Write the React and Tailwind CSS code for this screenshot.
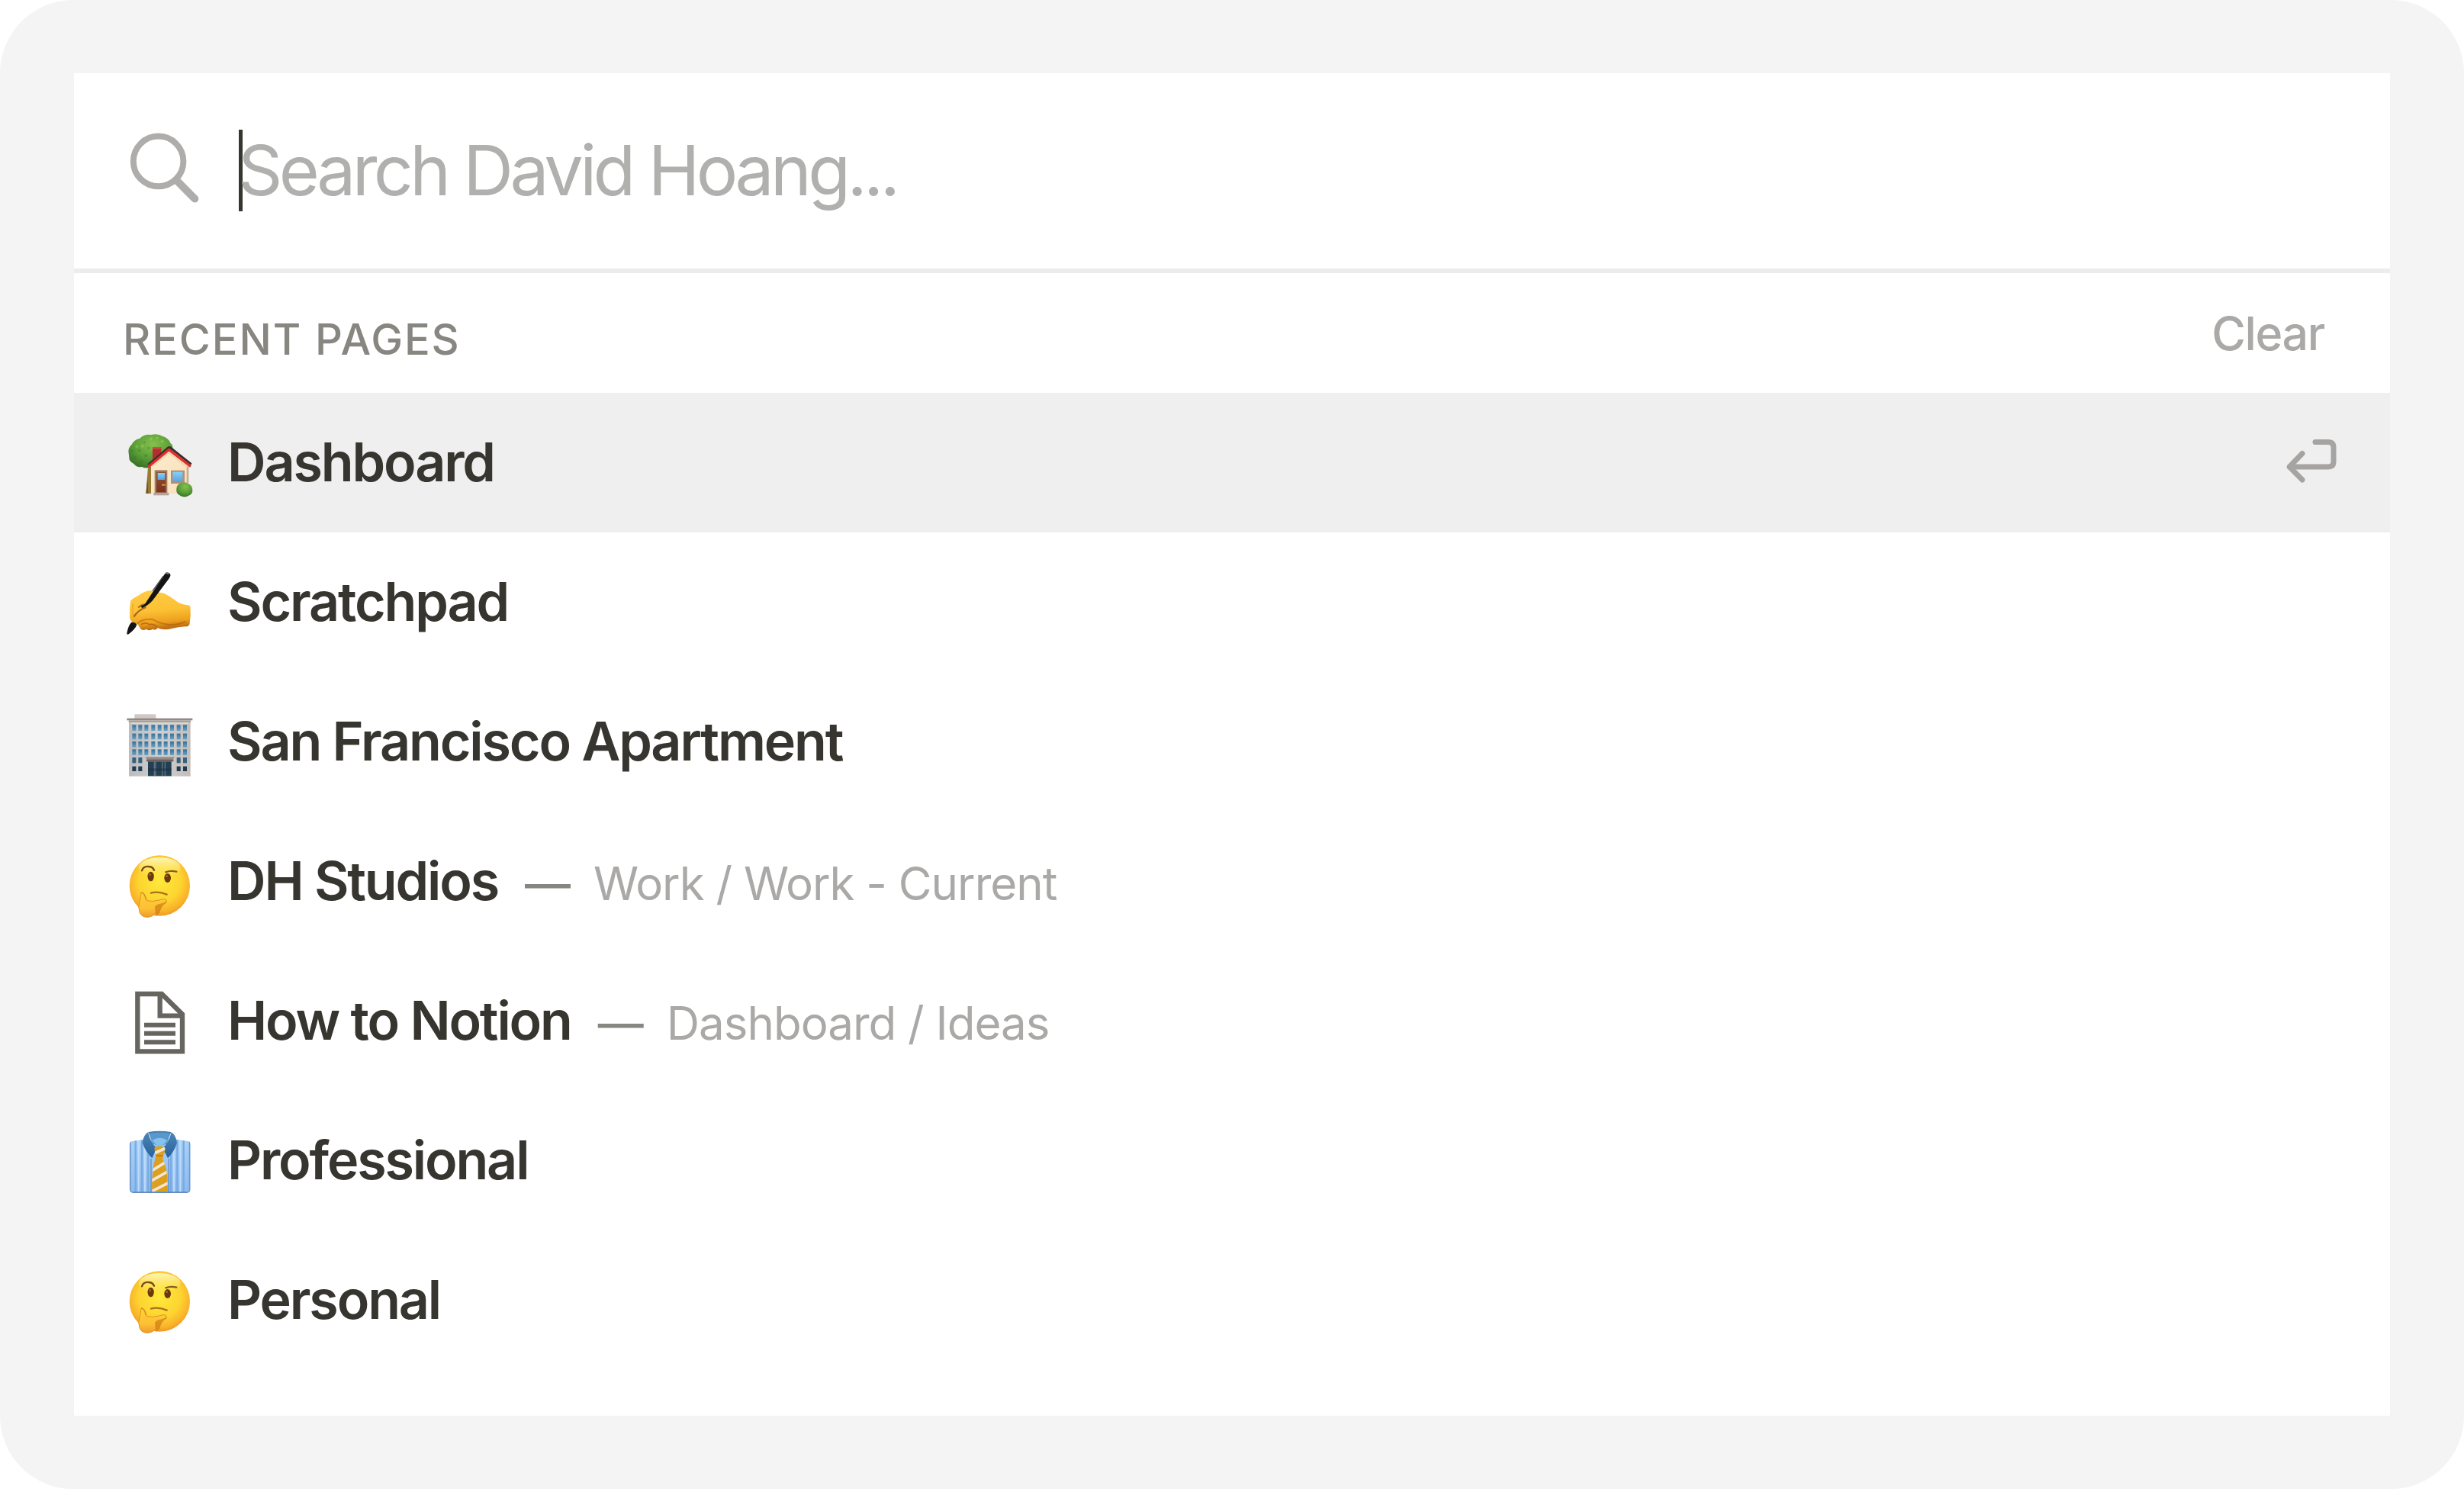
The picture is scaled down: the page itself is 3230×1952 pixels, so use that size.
import React from 'react';

const SearchIcon = () => (
  <svg className="w-[96px] h-[96px] shrink-0" viewBox="168 172 96 96" fill="none" stroke="#aeadab" strokeLinecap="round">
    <circle cx="207.6" cy="211.4" r="32.8" strokeWidth="8" />
    <path d="M232.5 237.5 L255.3 260.6" strokeWidth="10" />
  </svg>
);

const ReturnIcon = () => (
  <svg
    className="w-[72px] h-[64px] shrink-0"
    viewBox="2994 574 72 64"
    fill="none"
    stroke="#a5a4a2"
    strokeWidth="7"
    strokeLinecap="round"
    strokeLinejoin="round"
  >
    <path d="M3035 579.5 H3052 Q3059 579.5 3059 586.5 V605 Q3059 612 3052 612 H3001.5" />
    <path d="M3018 594.5 L3001.2 612 L3018 629" />
  </svg>
);

const HouseIcon = () => (
  <svg className="w-[120px] h-[120px] shrink-0" viewBox="0 -12 360 360">
    <defs>
      <radialGradient id="tree" cx="0.55" cy="0.3" r="0.7">
        <stop offset="0" stopColor="#86c04c" />
        <stop offset="0.6" stopColor="#5a9f38" />
        <stop offset="1" stopColor="#3a7428" />
      </radialGradient>
      <linearGradient id="wall" x1="0" y1="0" x2="1" y2="1">
        <stop offset="0" stopColor="#fdeccb" />
        <stop offset="1" stopColor="#f8dfba" />
      </linearGradient>
      <linearGradient id="houseDoor" x1="0" y1="0" x2="0" y2="1">
        <stop offset="0" stopColor="#8a5638" />
        <stop offset="1" stopColor="#7e2f1c" />
      </linearGradient>
      <linearGradient id="glass" x1="0" y1="0" x2="0" y2="1">
        <stop offset="0" stopColor="#86d0fb" />
        <stop offset="1" stopColor="#5ba2dc" />
      </linearGradient>
    </defs>
    <path
      d="M56 132 Q52 112 68 98 Q78 78 100 74 Q118 56 144 60 Q170 53 190 66 Q212 72 220 92 Q236 104 226 124 L150 184 Q128 196 108 186 Q88 190 76 174 Q56 164 58 148 Z"
      fill="url(#tree)"
    />
    <g fill="#3d7a29" opacity="0.45">
      <circle cx="80" cy="150" r="6" />
      <circle cx="104" cy="166" r="7" />
      <circle cx="98" cy="122" r="5" />
      <circle cx="124" cy="142" r="6" />
      <circle cx="134" cy="112" r="5" />
      <circle cx="118" cy="90" r="4" />
      <circle cx="70" cy="124" r="5" />
    </g>
    <g fill="#9bd05c" opacity="0.5">
      <circle cx="144" cy="76" r="6" />
      <circle cx="168" cy="72" r="5" />
      <circle cx="110" cy="104" r="6" />
      <circle cx="188" cy="86" r="6" />
      <circle cx="88" cy="106" r="5" />
    </g>
    <path d="M132 186 L146 176 V291 H124 Z" fill="#9a7b36" />
    <path d="M124 291 L130 230 L133 291 Z" fill="#6f5426" />
    <path d="M144 178 L214 122 L290 182 V292 H144 Z" fill="url(#wall)" />
    <path d="M284 184 H292 V250 H284 Z" fill="#c9ad93" />
    <path d="M150 108 H184 V134 L150 158 Z" fill="#b32e2e" />
    <path d="M150 108 H184 V116 H150 Z" fill="#cf4a44" />
    <path d="M133 178 L212 111 Q216 108 220 111 L302 176" fill="none" stroke="#3b2e2c" strokeWidth="9" />
    <path d="M133 186 L214 119 L300 184" fill="none" stroke="#e02f2b" strokeWidth="10" />
    <path d="M150 184 L214 132 L282 184" fill="none" stroke="#e8cfa8" strokeWidth="4" />
    <path d="M158 199 H208 V290 H158 Z" fill="#a27d64" />
    <path d="M165 206 H202 V286 H165 Z" fill="url(#houseDoor)" />
    <path d="M170 210 H198 V237 H170 Z" fill="url(#glass)" />
    <path d="M186 254 H200 V260 H186 Z" fill="#d39a36" />
    <path d="M154 288 H214 V298 H154 Z" fill="#b3a49c" />
    <path d="M222 200 H276 V252 H222 Z" fill="#b09078" />
    <path d="M229 206 H268 V244 H229 Z" fill="url(#glass)" />
    <path
      d="M244 272 Q246 254 262 250 Q278 242 290 252 Q306 258 307 276 Q308 294 292 299 Q276 309 260 300 Q244 292 244 280 Z"
      fill="url(#tree)"
    />
  </svg>
);

const WritingIcon = () => (
  <svg className="w-[120px] h-[120px] shrink-0" viewBox="0 -17 360 360">
    <defs>
      <linearGradient id="hand" x1="0" y1="0" x2="0.15" y2="1">
        <stop offset="0" stopColor="#ffcb46" />
        <stop offset="0.55" stopColor="#fcc135" />
        <stop offset="0.85" stopColor="#eda01d" />
        <stop offset="1" stopColor="#c07012" />
      </linearGradient>
    </defs>
    <path
      d="M64 158 Q76 146 94 138 Q118 120 142 118 L196 130 Q222 142 240 158 Q258 172 278 174 Q292 174 298 180 Q302 214 296 248 Q294 262 278 260 Q250 262 226 268 Q196 276 170 266 Q162 278 150 270 Q136 280 126 270 Q108 280 100 264 L90 250 Q66 248 60 226 Q58 190 64 158 Z"
      fill="url(#hand)"
    />
    <path d="M88 250 Q110 228 150 232 Q178 248 210 252 Q250 256 280 240" fill="none" stroke="#a55a0b" strokeWidth="6" opacity="0.5" />
    <path d="M104 252 Q124 240 140 254 M136 254 Q150 246 168 262" fill="none" stroke="#a65c10" strokeWidth="5" opacity="0.7" />
    <path d="M76 222 Q92 196 124 184" fill="none" stroke="#8a4d0e" strokeWidth="7" opacity="0.75" />
    <path d="M94 186 Q104 174 124 172" fill="none" stroke="#7d4a12" strokeWidth="6" opacity="0.7" />
    <path d="M72 170 Q70 200 74 226" fill="none" stroke="#e9a126" strokeWidth="6" opacity="0.6" />
    <path d="M104 178 Q118 178 126 162 L196 56 Q206 42 218 52 Q224 60 214 72 L150 158 Q132 178 108 188 Z" fill="#141414" />
    <path d="M202 48 L214 54" stroke="#8b7468" strokeWidth="6" />
    <path d="M150 120 L192 62" stroke="#44474a" strokeWidth="4" />
    <path d="M66 244 Q80 240 88 252 Q84 268 56 290 Q48 294 49 286 Q54 258 66 244 Z" fill="#141414" />
  </svg>
);

const OfficeIcon = () => (
  <svg className="w-[120px] h-[120px] shrink-0" viewBox="0 -9 360 360">
    <defs>
      <linearGradient id="pane" x1="0" y1="0" x2="0" y2="1">
        <stop offset="0" stopColor="#356f96" />
        <stop offset="1" stopColor="#6ba3c6" />
      </linearGradient>
      <linearGradient id="facade" x1="0" y1="0" x2="1" y2="0">
        <stop offset="0" stopColor="#bcbcbe" />
        <stop offset="0.5" stopColor="#d0d0d1" />
        <stop offset="1" stopColor="#c3bdba" />
      </linearGradient>
    </defs>
    <rect x="79" y="64" width="84" height="18" fill="#cfc8c4" />
    <rect x="57" y="92" width="242" height="216" fill="url(#facade)" />
    <rect x="49" y="80" width="258" height="8" fill="#8f8883" />
    <rect x="56" y="88" width="244" height="8" fill="#a8a09b" />
    <rect x="64" y="96" width="228" height="6" fill="#dcd6d0" />
    {[106, 140, 171, 202].map((y) =>
      [70, 94, 118, 145, 170, 194, 219, 245, 270].map((x) => (
        <rect key={`${x}-${y}`} x={x} y={y} width="15" height="23" fill="url(#pane)" />
      ))
    )}
    {[70, 94, 245, 270].map((x) => (
      <g key={x}>
        <rect x={x} y="234" width="15" height="22" fill="#36607e" />
        <rect x={x} y="269" width="15" height="19" fill="#1f3b50" />
      </g>
    ))}
    <path d="M122 232 H236 L230 244 H128 Z" fill="#958c88" />
    <rect x="126" y="242" width="106" height="8" fill="#6d6462" />
    <rect x="132" y="250" width="92" height="57" fill="#243f52" />
    <path d="M157 250 V307 M162 250 V307 M188 250 V307 M199 250 V307" stroke="#5f7686" strokeWidth="4" />
    <path d="M132 282 H224" stroke="#1a3040" strokeWidth="10" opacity="0.5" />
  </svg>
);

const ThinkingIcon = ({ id, className = '' }) => (
  <svg className={`w-[120px] h-[120px] shrink-0 ${className}`} viewBox="0 -15 360 360">
    <defs>
      <radialGradient id={`${id}-face`} cx="0.5" cy="0.42" r="0.58">
        <stop offset="0" stopColor="#ffe93c" />
        <stop offset="0.6" stopColor="#fdd430" />
        <stop offset="0.88" stopColor="#f9b22a" />
        <stop offset="1" stopColor="#ee9a24" />
      </radialGradient>
      <linearGradient id={`${id}-shine`} x1="0" y1="0" x2="0" y2="1">
        <stop offset="0" stopColor="#fffbd0" />
        <stop offset="1" stopColor="#fff27a" stopOpacity="0" />
      </linearGradient>
      <linearGradient id={`${id}-hand`} x1="0" y1="0" x2="0" y2="1">
        <stop offset="0" stopColor="#ffd23a" />
        <stop offset="0.65" stopColor="#fdbf33" />
        <stop offset="1" stopColor="#ee9b2c" />
      </linearGradient>
    </defs>
    <circle cx="178" cy="183" r="119" fill={`url(#${id}-face)`} />
    <ellipse cx="178" cy="112" rx="82" ry="40" fill={`url(#${id}-shine)`} opacity="0.85" />
    <path d="M108 124 Q114 106 134 108 Q150 108 156 122" fill="none" stroke="#7c4a10" strokeWidth="7" strokeLinecap="round" />
    <path d="M202 130 Q220 122 244 128" fill="none" stroke="#80601a" strokeWidth="7" strokeLinecap="round" />
    <ellipse cx="143" cy="147" rx="12.5" ry="19" fill="#6b3a0c" />
    <ellipse cx="209" cy="153" rx="13" ry="18" fill="#6b3a0c" />
    <circle cx="140" cy="140" r="4" fill="#a06f2a" />
    <circle cx="206" cy="146" r="4" fill="#a06f2a" />
    <path d="M144 212 Q172 204 206 218" fill="none" stroke="#a87218" strokeWidth="7" strokeLinecap="round" />
    <path d="M160 258 Q190 254 204 240 L206 250 Q184 262 178 290 L164 304 Z" fill="#cf7a16" opacity="0.7" />
    <path
      d="M106 210 Q116 208 122 226 L127 242 Q150 248 176 240 Q198 232 204 240 Q206 250 186 254 Q164 258 160 266 L162 288 Q156 304 132 307 Q108 308 100 290 Q92 270 98 246 Q104 230 104 218 Z"
      fill={`url(#${id}-hand)`}
      stroke="#e09320"
      strokeWidth="3"
    />
    <path d="M104 212 Q116 206 124 238" fill="none" stroke="#c98318" strokeWidth="4" opacity="0.7" />
  </svg>
);

const PageIcon = () => (
  <svg className="w-[120px] h-[120px] shrink-0" viewBox="0 -7 360 360" fill="none" stroke="#666560">
    <path d="M91 68 H186 L267 148 V294 H91 Z" strokeWidth="19" />
    <path d="M179 68 V154 H267" strokeWidth="19" />
    <path d="M117 190 H240 M117 223 H240 M117 258 H240" strokeWidth="18" />
  </svg>
);

const ShirtIcon = () => (
  <svg className="w-[120px] h-[120px] shrink-0" viewBox="0 -14 360 360">
    <defs>
      <linearGradient id="cloth" x1="0" y1="0" x2="0" y2="1">
        <stop offset="0" stopColor="#a9d2fa" />
        <stop offset="1" stopColor="#8db9ee" />
      </linearGradient>
      <linearGradient id="collar" x1="0" y1="0" x2="0" y2="1">
        <stop offset="0" stopColor="#4c86b8" />
        <stop offset="1" stopColor="#27619a" />
      </linearGradient>
      <clipPath id="body">
        <path d="M70 91 L120 84 H240 L290 91 Q299 93 299 106 V278 Q299 295 282 295 H76 Q60 295 59 278 V104 Q60 93 70 91 Z" />
      </clipPath>
      <clipPath id="tie">
        <path d="M158 116 Q178 104 198 116 Q202 130 192 146 L190 162 Q204 190 208 230 L210 290 H148 Q146 210 160 162 L164 146 Q156 132 158 116 Z" />
      </clipPath>
    </defs>
    <g clipPath="url(#body)">
      <rect x="55" y="80" width="250" height="220" fill="url(#cloth)" />
      <path
        d="M83 80 V300 M108 80 V300 M133 80 V300 M222 80 V300 M247 80 V300 M272 80 V300"
        stroke="#78abe2"
        strokeWidth="7"
      />
      <path d="M95 80 V300 M120 80 V300 M234 80 V300 M259 80 V300" stroke="#bcdbfb" strokeWidth="6" />
      <path d="M62 80 V300 M296 80 V300" stroke="#7399c8" strokeWidth="6" />
      <path d="M55 293 H305" stroke="#628bc0" strokeWidth="6" />
      <path d="M144 160 V300 M213 160 V300" stroke="#4e80bb" strokeWidth="5" opacity="0.6" />
    </g>
    <path d="M134 58 Q178 50 222 58 L206 100 L178 114 L150 100 Z" fill="#5a98cc" />
    <path d="M148 88 Q178 68 208 88 L178 120 Z" fill="#83c3ee" />
    <path d="M132 56 Q114 66 110 98 Q122 132 148 158 L166 118 Q142 98 132 56 Z" fill="url(#collar)" />
    <path d="M224 56 Q242 66 246 98 Q236 132 210 158 L190 118 Q214 98 224 56 Z" fill="url(#collar)" />
    <path d="M134 58 Q178 50 222 58" fill="none" stroke="#457eb0" strokeWidth="6" />
    <g clipPath="url(#tie)">
      <rect x="140" y="100" width="80" height="200" fill="#dd9f1d" />
      <path d="M150 142 L206 116 M146 208 L210 168 M140 250 L214 208 M140 292 L214 254" stroke="#f3e8d2" strokeWidth="11" />
      <path d="M158 148 H198" stroke="#a86f10" strokeWidth="5" opacity="0.7" />
    </g>
  </svg>
);

const pages = [
  { title: 'Dashboard', icon: <HouseIcon />, selected: true },
  { title: 'Scratchpad', icon: <WritingIcon /> },
  { title: 'San Francisco Apartment', icon: <OfficeIcon /> },
  { title: 'DH Studios', icon: <ThinkingIcon id="studios" />, path: 'Work / Work - Current' },
  { title: 'How to Notion', icon: <PageIcon />, path: 'Dashboard / Ideas' },
  { title: 'Professional', icon: <ShirtIcon /> },
  { title: 'Personal', icon: <ThinkingIcon id="personal" className="-mt-2" /> },
];

const PageRow = ({ page }) => (
  <li className={`flex h-[182.9px] items-center pl-[53px] pr-[67px] ${page.selected ? 'bg-[#efefef]' : ''}`}>
    {page.icon}
    <div className="ml-7 -mt-px flex flex-1 items-baseline whitespace-nowrap">
      <span className="text-[70px] font-semibold tracking-[-2.15px] text-[#37352f]">{page.title}</span>
      {page.path && (
        <>
          <span className="ml-[35px] text-[60px] font-medium text-[#888680]">—</span>
          <span className="ml-[30px] text-[60px] tracking-[-1px] text-[#aaa9a7]">{page.path}</span>
        </>
      )}
    </div>
    {page.selected && <ReturnIcon />}
  </li>
);

const App = () => {
  return (
    <div className="h-[1952px] w-[3230px] bg-white font-['Inter',sans-serif]">
      <div className="h-full rounded-[96px] bg-[#f4f4f4] px-[97px] py-24">
        <div className="flex h-[1760px] flex-col bg-white">
          <div className="flex h-[262px] items-center border-b-[6px] border-[#edeceb] pl-[71px]">
            <div className="-mt-2">
              <SearchIcon />
            </div>
            <div className="ml-[49px] -mt-[2px] h-[107px] w-[5px] bg-[#37352f]" />
            <span className="-ml-[6px] -mt-[2px] text-[91px] tracking-[-4.6px] text-[#b0b0ae]">Search David Hoang...</span>
          </div>

          <div className="flex h-[157px] items-center justify-between pl-[64px] pr-[86px]">
            <h2 className="mt-4 text-[56px] font-medium tracking-[1.9px] text-[#888680]">RECENT PAGES</h2>
            <button className="mt-[2px] text-[61px] font-medium tracking-[-1.4px] text-[#aaa9a7]">Clear</button>
          </div>

          <ul>
            {pages.map((page) => (
              <PageRow key={page.title} page={page} />
            ))}
          </ul>
        </div>
      </div>
    </div>
  );
};

export default App;
